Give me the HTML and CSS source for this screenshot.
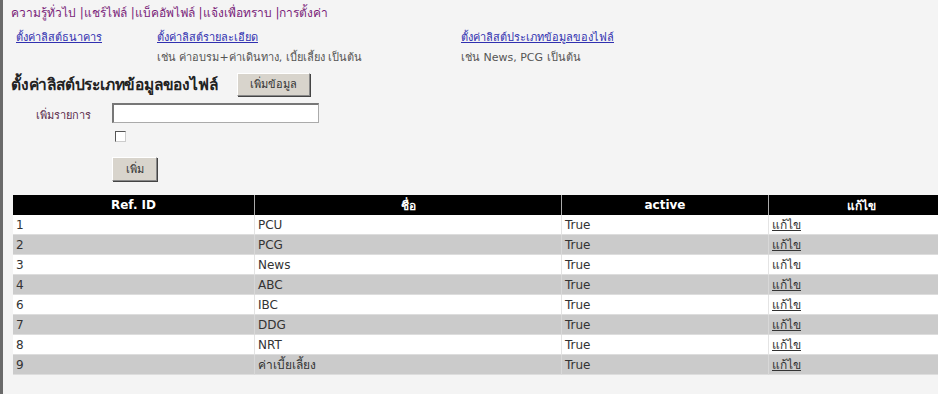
FILE: index.html
```html
<!DOCTYPE html>
<html lang="th">
<head>
    <meta charset="UTF-8">
    <title>การตั้งค่า</title>
    <link rel="stylesheet" href="styles.css">
</head>
<body>
    <div class="page">
        <div class="topnav">
            <a href="#">ความรู้ทั่วไป</a> |<a href="#">แชร์ไฟล์</a> |<a href="#">แบ็คอัพไฟล์</a> |<a href="#">แจ้งเพื่อทราบ</a> |<a href="#">การตั้งค่า</a>
        </div>

        <div class="settings">
            <div class="setting bank">
                <a href="#">ตั้งค่าลิสต์ธนาคาร</a>
            </div>
            <div class="setting detail">
                <a href="#">ตั้งค่าลิสต์รายละเอียด</a>
                <p>เช่น ค่าอบรม+ค่าเดินทาง, เบี้ยเลี้ยง เป็นต้น</p>
            </div>
            <div class="setting filetype">
                <a href="#">ตั้งค่าลิสต์ประเภทข้อมูลของไฟล์</a>
                <p>เช่น News, PCG เป็นต้น</p>
            </div>
        </div>

        <div class="title-row">
            <h2>ตั้งค่าลิสต์ประเภทข้อมูลของไฟล์</h2>
            <button class="btn">เพิ่มข้อมูล</button>
        </div>

        <div class="add-form">
            <label for="item">เพิ่มรายการ</label>
            <div class="fields">
                <input type="text" id="item">
                <span class="check"></span>
                <button class="btn add">เพิ่ม</button>
            </div>
        </div>

        <table class="grid">
            <thead>
                <tr>
                    <th class="c-id">Ref. ID</th>
                    <th class="c-name">ชื่อ</th>
                    <th class="c-active">active</th>
                    <th>แก้ไข</th>
                </tr>
            </thead>
            <tbody>
                <tr><td>1</td><td>PCU</td><td>True</td><td><a href="#">แก้ไข</a></td></tr>
                <tr class="alt"><td>2</td><td>PCG</td><td>True</td><td><a href="#">แก้ไข</a></td></tr>
                <tr><td>3</td><td>News</td><td>True</td><td><a href="#" class="plain">แก้ไข</a></td></tr>
                <tr class="alt"><td>4</td><td>ABC</td><td>True</td><td><a href="#">แก้ไข</a></td></tr>
                <tr><td>6</td><td>IBC</td><td>True</td><td><a href="#">แก้ไข</a></td></tr>
                <tr class="alt"><td>7</td><td>DDG</td><td>True</td><td><a href="#">แก้ไข</a></td></tr>
                <tr><td>8</td><td>NRT</td><td>True</td><td><a href="#">แก้ไข</a></td></tr>
                <tr class="alt"><td>9</td><td>ค่าเบี้ยเลี้ยง</td><td>True</td><td><a href="#">แก้ไข</a></td></tr>
            </tbody>
        </table>
    </div>
</body>
</html>
```

FILE: styles.css
```css
* {
    margin: 0;
    padding: 0;
    box-sizing: border-box;
}

body {
    font-family: Tahoma, "DejaVu Sans", sans-serif;
    font-size: 11px;
    color: #333;
    background: #f4f4f4;
    overflow: hidden;
}

.page {
    border-left: 3px solid #6a6a6a;
    min-height: 394px;
    width: 960px;
    padding-top: 3px;
}

.topnav {
    padding-left: 8px;
    font-size: 12px;
    color: #7a1f7a;
    height: 20px;
}

.topnav a {
    color: #7a1f7a;
    text-decoration: none;
}

.settings {
    display: flex;
    padding-left: 13px;
    height: 47px;
    padding-top: 5px;
}

.setting a {
    color: #3030b0;
    font-size: 11px;
}

.setting p {
    color: #555;
    margin-top: 2px;
}

.bank { width: 141px; }
.detail { width: 304px; }

.title-row {
    display: flex;
    align-items: center;
    padding-left: 8px;
    gap: 20px;
    height: 28px;
}

.title-row h2 {
    font-size: 15.5px;
    color: #222;
    letter-spacing: -0.2px;
}

.btn {
    font-family: inherit;
    font-size: 11px;
    color: #333;
    background: #d8d4cc;
    border: 1px solid #888;
    border-top-color: #fff;
    border-left-color: #fff;
    box-shadow: 1px 1px 0 #444;
    height: 23px;
    padding: 0 12px;
}

.add-form {
    display: flex;
    padding-left: 33px;
    padding-top: 5px;
}

.add-form label {
    width: 76px;
    padding-top: 3px;
    color: #5a2a4a;
}

.fields {
    display: flex;
    flex-direction: column;
    align-items: flex-start;
}

.fields input {
    width: 207px;
    height: 20px;
    border: 1px solid #aaa;
    border-top: 2px solid #777;
    border-left: 2px solid #777;
    background: #fff;
}

.check {
    width: 11px;
    height: 11px;
    border: 1px solid #555;
    border-right-color: #ccc;
    border-bottom-color: #ccc;
    background: #fff;
    margin: 8px 0 0 3px;
}

.btn.add {
    margin-top: 15px;
    height: 24px;
    width: 45px;
    padding: 0;
}

.grid {
    margin: 14px 0 0 10px;
    border-collapse: separate;
    border-spacing: 0;
    width: 940px;
    font-size: 12px;
}

.grid th {
    background: #000;
    color: #fff;
    font-weight: bold;
    height: 20px;
    border-left: 1px solid #aaa;
}

.grid th:first-child,
.grid td:first-child {
    border-left: none;
}

.c-id { width: 241px; }
.c-name { width: 307px; }
.c-active { width: 207px; }

.grid td {
    height: 20px;
    padding: 0 3px;
    background: #fff;
    border-left: 1px solid #e4e4e4;
    border-bottom: 1px solid #ddd;
}

.grid tr.alt td {
    background: #cbcbcb;
    border-left-color: #d8d8d8;
}

.grid td a {
    color: #333;
}

.grid td a.plain {
    text-decoration: none;
}
```
